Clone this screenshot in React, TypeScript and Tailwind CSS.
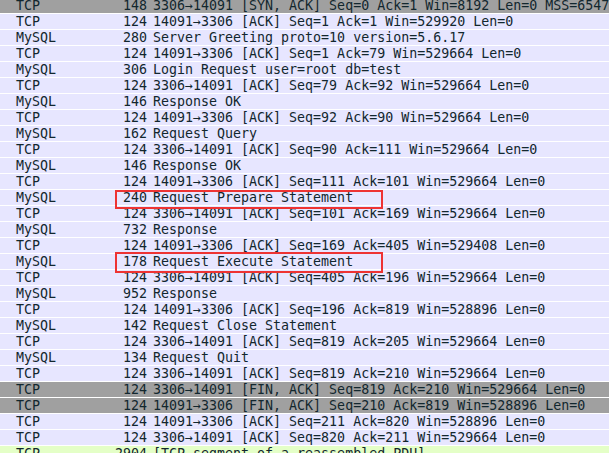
import React from "react";

type Row = { p: string; l: string; i: string; bg?: "gray" | "green" };

const rows: Row[] = [
  { p: "TCP", l: "148", i: "3306→14091 [SYN, ACK] Seq=0 Ack=1 Win=8192 Len=0 MSS=65475", bg: "gray" },
  { p: "TCP", l: "124", i: "14091→3306 [ACK] Seq=1 Ack=1 Win=529920 Len=0" },
  { p: "MySQL", l: "280", i: "Server Greeting proto=10 version=5.6.17" },
  { p: "TCP", l: "124", i: "14091→3306 [ACK] Seq=1 Ack=79 Win=529664 Len=0" },
  { p: "MySQL", l: "306", i: "Login Request user=root db=test" },
  { p: "TCP", l: "124", i: "3306→14091 [ACK] Seq=79 Ack=92 Win=529664 Len=0" },
  { p: "MySQL", l: "146", i: "Response OK" },
  { p: "TCP", l: "124", i: "14091→3306 [ACK] Seq=92 Ack=90 Win=529664 Len=0" },
  { p: "MySQL", l: "162", i: "Request Query" },
  { p: "TCP", l: "124", i: "3306→14091 [ACK] Seq=90 Ack=111 Win=529664 Len=0" },
  { p: "MySQL", l: "146", i: "Response OK" },
  { p: "TCP", l: "124", i: "14091→3306 [ACK] Seq=111 Ack=101 Win=529664 Len=0" },
  { p: "MySQL", l: "240", i: "Request Prepare Statement" },
  { p: "TCP", l: "124", i: "3306→14091 [ACK] Seq=101 Ack=169 Win=529664 Len=0" },
  { p: "MySQL", l: "732", i: "Response" },
  { p: "TCP", l: "124", i: "14091→3306 [ACK] Seq=169 Ack=405 Win=529408 Len=0" },
  { p: "MySQL", l: "178", i: "Request Execute Statement" },
  { p: "TCP", l: "124", i: "3306→14091 [ACK] Seq=405 Ack=196 Win=529664 Len=0" },
  { p: "MySQL", l: "952", i: "Response" },
  { p: "TCP", l: "124", i: "14091→3306 [ACK] Seq=196 Ack=819 Win=528896 Len=0" },
  { p: "MySQL", l: "142", i: "Request Close Statement" },
  { p: "TCP", l: "124", i: "3306→14091 [ACK] Seq=819 Ack=205 Win=529664 Len=0" },
  { p: "MySQL", l: "134", i: "Request Quit" },
  { p: "TCP", l: "124", i: "3306→14091 [ACK] Seq=819 Ack=210 Win=529664 Len=0" },
  { p: "TCP", l: "124", i: "3306→14091 [FIN, ACK] Seq=819 Ack=210 Win=529664 Len=0", bg: "gray" },
  { p: "TCP", l: "124", i: "14091→3306 [FIN, ACK] Seq=210 Ack=819 Win=528896 Len=0", bg: "gray" },
  { p: "TCP", l: "124", i: "14091→3306 [ACK] Seq=211 Ack=820 Win=528896 Len=0" },
  { p: "TCP", l: "124", i: "3306→14091 [ACK] Seq=820 Ack=211 Win=529664 Len=0" },
  { p: "TCP", l: "2904", i: "[TCP segment of a reassembled PDU]", bg: "green" },
];

export default function App() {
  return (
    <div
      className="relative w-[609px] h-[453px] overflow-hidden bg-white text-[#12272e] text-[13.3px] leading-[15px]"
      style={{ fontFamily: '"DejaVu Sans Mono", "Liberation Mono", monospace' }}
    >
      <div className="-mt-[2px] flex flex-col">
        {rows.map((r, idx) => (
          <div
            key={idx}
            className={
              "flex h-[16px] shrink-0 whitespace-nowrap border-b border-white " +
              (r.bg === "gray"
                ? "bg-[#a0a0a0]"
                : r.bg === "green"
                ? "bg-[#e4ffc7]"
                : "bg-[#e7e6ff]")
            }
          >
            <div className="w-[100px] shrink-0 pl-[16px]">{r.p}</div>
            <div className="w-[47px] shrink-0 text-right">{r.l}</div>
            <div className="pl-[6px]">{r.i}</div>
          </div>
        ))}
      </div>
      <div className="absolute left-[115px] top-[190px] w-[268px] h-[19px] border-2 border-[#ee3333]" />
      <div className="absolute left-[115px] top-[252px] w-[268px] h-[21px] border-2 border-[#ee3333]" />
    </div>
  );
}
